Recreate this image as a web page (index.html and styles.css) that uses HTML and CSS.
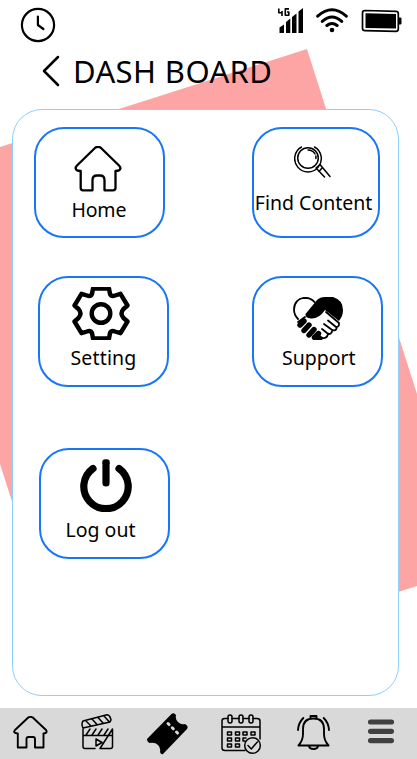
FILE: index.html
```
<!DOCTYPE html>
<html lang="en">
<head>
<meta charset="utf-8">
<title>Dash board</title>
<link rel="stylesheet" href="styles.css">
</head>
<body>
<main class="screen">
  <svg class="backdrop" viewBox="0 0 417 759" aria-hidden="true"><path d="M0 147 307 49 417 394V586L73.700 694.800 0 464Z"/></svg>
  <header class="status">
    <svg class="clock" viewBox="0 0 36 36"><circle cx="18" cy="18" r="16.100"/><path d="M17.900 9.500v8.500l5.500 4"/></svg>
    <svg class="signal" viewBox="0 0 26 26"><path d="M1.500 19.500 6 16.500V25H1.500ZM8 14 12.300 10.500V25H8ZM14 9 18.500 5.500V25H14ZM20.500 3.500 25 0V25H20.500Z"/><path class="gen" d="M.8.500v4.300h4M4 3v5M11 .9H7.300V7.200h3.500V4H9"/></svg>
    <svg class="wifi" viewBox="0 0 32 25"><path d="M1.700 8.200Q16-4.600 30.300 8.200M6.300 13.400Q16 4.600 25.700 13.400M10.900 17.500Q16 13.400 21.100 17.500"/><circle cx="16" cy="22" r="2.300"/></svg>
    <svg class="battery" viewBox="0 0 41 24"><path class="shell" d="M4 1.500 35 2.300Q37.300 2.400 37.300 4.500V20Q37.300 22.300 35 22.300L4 21.700Q1.500 21.600 1.500 19.500V4Q1.500 1.500 4 1.500Z"/><path d="M4.500 4.300 35 5V19.500L4.500 19ZM38 8.500h1.300q1.200 0 1.200 1.200v4.500q0 1.300-1.200 1.300H38Z"/></svg>
  </header>
  <div class="heading">
    <svg class="back" viewBox="0 0 18 32"><path d="M16 2 2 16 16 30"/></svg>
    <h1>DASH BOARD</h1>
  </div>
  <section class="panel">
    <div class="row first">
      <a class="tile home">
        <svg class="line" viewBox="0 0 48 46"><path d="M21.500 1.500Q24 0 26.500 1.500L45 19.500Q47.500 22 45.500 24 44 25 41.500 25V42Q41.500 44.300 39 44.300H30.500V34Q30.500 29.500 26 29.500H23Q18.500 29.500 18.500 34V44.300H9Q6.700 44.300 6.700 42V25Q4 25 2.500 24 .5 22 3 19.500Z"/></svg>
        <span>Home</span>
      </a>
      <a class="tile find">
        <svg class="lens" viewBox="0 0 37 33"><path d="M7.500 1A13.300 13.300 0 1 0 20.500 1"/><circle cx="14" cy="12" r="10.300"/><path d="M14 4q5 .2 7 4M21.900 10v2.500M22 22 30.500 31M26 18.500 36 30.500M22 22 26 18.500M25 25.500l3.500-4"/></svg>
        <span>Find Content</span>
      </a>
    </div>
    <div class="row second">
      <a class="tile setting">
        <svg class="gear" viewBox="0 0 58 53"><path d="M21 1.500H37L38 7Q39.500 10 43 8.500L48.500 6.800 55.500 18.500 51.500 22Q47.500 26.500 51.500 31L55.500 34.500 48.500 46.200 43 44.500Q39.500 43 38 46L37 51.500H21L20 46Q18.500 43 15 44.500L9.500 46.200 2.500 34.500 6.500 31Q10.500 26.500 6.500 22L2.500 18.500 9.500 6.800 15 8.500Q18.500 10 20 7Z"/><circle cx="29" cy="26.500" r="9.300"/></svg>
        <span>Setting</span>
      </a>
      <a class="tile support">
        <svg class="hands" viewBox="0 0 50 43"><path class="cuff" d="M5 22Q1 18 1 12.500C1 6 5 1 12 .8Q18 .8 21.500 5"/><path d="M24 3Q27 0 32 0H40Q50 3 50 13 50 19 46 24L32 13Q26 22 18 21.500 12 21 12.500 17Z"/><path class="fingers" d="m11 24-4 4M16 28l-5 5.500M21 32.500l-5 5.500M25.500 36.500l-4 4"/><path d="M24 40l3-2 3.500 3-1.500 2h-7Z"/><path class="cuff" d="M12 20 5 25M33 15 46 26Q46.500 30 43 30L35 23.500M44 30Q43 35 38.500 32.500L31 27M39.500 33Q38 39 34 36L29 32M35 37Q34 42 29 41"/></svg>
        <span>Support</span>
      </a>
    </div>
    <div class="row third">
      <a class="tile logout">
        <svg class="power" viewBox="0 0 52 53"><path d="M13 9.500A22.200 22.200 0 1 0 39 9.500M26 24V4"/><path d="M22.500 5V2Q22.500.5 24 .5h4q1.500 0 1.500 1.500v3" class="cap"/></svg>
        <span>Log out</span>
      </a>
    </div>
  </section>
  <nav class="tabs">
    <svg class="tab-home" viewBox="0 0 35 33"><path d="M15.500 1.300Q17.500.5 19.500 1.300L33 14Q35 17 30.500 17.500V31.500H22V23Q22 21 20 21H15.500Q13.500 21 13.500 23V31.500H4.800V17.500Q-.5 17 2 14Z"/></svg>
    <svg class="tab-film" viewBox="0 0 33 36"><path d="M2 15V32.500Q2 34.500 4 34.500H14M19 34.500h10.500Q31.500 34.500 31.500 32.500V15ZM2 21.500H31.500M5 21l4-6M11 21l4-6M17 21l4-6M23 21l4-6M2 14Q0 10 2 7L26 .8Q29 1 30 6L29 8 2 14ZM5 7l5 5M11 5l5 5.500M17 3.500l5 5.500M23 2l5 5.500M15 25v7l6-3.500Z"/></svg>
    <svg class="tab-ticket" viewBox="0 0 41 42"><path d="M0 26 24.500 1Q27-1 29 2 28 6 31 9 34 12 38 11 42 13 40 16L16 41Q14 42 13 39 14 35 11 32 8 29 3 30 0 29 0 26Z"/><path class="perf" d="M21 10.500 31.500 21"/></svg>
    <svg class="tab-calendar" viewBox="0 0 40 40"><path d="M24 36.500H4Q1 36.500 1 34V7Q1 4.500 3.500 4.500H7M11 4.500h7M22 4.500h6M32 4.500h4Q39 4.500 39 7V25M1 13H39"/><rect x="7" y="1" width="4" height="8" rx="2"/><rect x="18" y="1" width="4" height="8" rx="2"/><rect x="28" y="1" width="4" height="8" rx="2"/><path d="M6.500 18h4v3h-4zM14.500 18h4v3h-4zM22 18h4v3h-4zM30 18h4v3h-4zM6.500 24h4v3h-4zM14.500 24h4v3h-4zM25 24h-3v3h2M6.500 30h4v3h-4zM14.500 30h4v3h-4z"/><circle cx="31.500" cy="31.500" r="7.800"/><path d="m27 31.500 3.300 3.500 6-7"/></svg>
    <svg class="tab-bell" viewBox="0 0 33 35"><path d="M1.500 30.500Q6 25.500 6 19V14Q6 3.500 16.500 3.500T27 14v5q0 6.500 4.500 11.500ZM13.500 4V1h6v3M12 31q.5 3 4.500 3t4.500-3M6.300 3Q1.300 8 1 15M26.700 3Q31.700 8 32 15"/></svg>
    <svg class="tab-menu" viewBox="0 0 26 25"><path d="M2.500 3h21M2.500 12.300h21M2.500 21.700h21"/></svg>
  </nav>
</main>
</body>
</html>
```
FILE: styles.css
```
* { box-sizing: border-box; }
body { margin: 0; background: #fff; color: #000; font-family: "Noto Sans", sans-serif; }
svg { display: block; flex: none; fill: none; stroke: #000; stroke-linecap: round; stroke-linejoin: round; }
.screen { position: relative; isolation: isolate; display: flex; flex-direction: column; width: 417px; height: 759px; overflow: hidden; }
.backdrop { position: absolute; z-index: -1; inset: 0; width: 417px; height: 759px; fill: #fda5a5; stroke: none; }

.status { display: flex; align-items: flex-start; height: 50px; padding: 7px 0 0 20px; }
.clock { width: 36px; height: 36px; stroke-width: 2.200; }
.signal { width: 26px; height: 26px; margin: 1px 0 0 222px; fill: #000; stroke: none; overflow: visible; }
.signal .gen { fill: none; stroke: #000; stroke-width: 1.600; stroke-linecap: butt; }
.wifi { width: 32px; height: 25px; margin: 1px 0 0 12px; stroke-width: 3; }
.wifi circle { fill: #000; stroke: none; }
.battery { width: 41px; height: 24px; margin: 2px 0 0 13px; fill: #000; stroke: none; }
.battery .shell { fill: none; stroke: #000; stroke-width: 1.700; }

.heading { display: flex; align-items: center; height: 59px; padding: 0 0 17px 42px; }
.back { width: 18px; height: 32px; stroke-width: 2.500; }
h1 { margin: 0 0 0 13px; font-size: 31px; font-weight: 400; line-height: 42px; white-space: nowrap; letter-spacing: 0.400px; }

.panel { width: 387px; height: 587px; margin-left: 12px; padding-top: 17px; background: #fff; border: 1px solid #8dd0fb; border-radius: 30px; }
.row { display: flex; align-items: flex-start; }
.first { padding-left: 21px; gap: 87px; height: 149px; }
.second { padding-left: 25px; gap: 83px; height: 172px; }
.third { padding-left: 26px; }
.tile { display: flex; flex-direction: column; align-items: flex-start; width: 131px; height: 111px; border: 2px solid #1877f2; border-radius: 30px; }
.tile span { font-size: 19.500px; line-height: 26px; white-space: nowrap; }
.find { width: 128px; }
.home svg { width: 48px; height: 46px; margin: 17px 0 0 38px; stroke-width: 2.300; }
.home span { margin: 5px 0 0 35.500px; letter-spacing: -0.200px; }
.find svg { width: 37px; height: 33px; margin: 17px 0 0 40px; stroke-width: 1.500; }
.find span { margin: 11px 0 0 0.800px; }
.setting svg { width: 58px; height: 53px; margin: 9px 0 0 32px; stroke-width: 4.400; }
.setting span { margin: 5px 0 0 30.500px; letter-spacing: 0.150px; }
.support svg { width: 50px; height: 43px; margin: 19px 0 0 39px; fill: #000; stroke: none; }
.support .cuff { fill: none; stroke: #000; stroke-width: 1.800; }
.support .fingers { fill: none; stroke: #000; stroke-width: 5.400; }
.support span { margin: 5px 0 0 28px; }
.logout svg { width: 52px; height: 53px; margin: 9px 0 0 38.500px; stroke-width: 7.200; }
.logout .cap { fill: #000; stroke: none; }
.logout span { margin: 5px 0 0 24.500px; }

.tabs { display: flex; align-items: flex-start; width: 417px; height: 51px; margin-top: 12px; background: #d9d9d9; }
.tab-home { width: 35px; height: 33px; margin: 8px 0 0 12.500px; stroke-width: 1.900; }
.tab-film { width: 33px; height: 36px; margin: 6px 0 0 33px; stroke-width: 1.500; }
.tab-ticket { width: 41px; height: 42px; margin: 5px 0 0 33px; fill: #000; stroke: none; }
.tab-ticket .perf { stroke: #d9d9d9; stroke-width: 3; stroke-dasharray: 1.500 4.500; }
.tab-calendar { width: 40px; height: 40px; margin: 6px 0 0 33.500px; stroke-width: 1.500; overflow: visible; }
.tab-bell { width: 33px; height: 35px; margin: 7px 0 0 35.500px; stroke-width: 1.900; }
.tab-menu { width: 26px; height: 25px; margin: 11px 0 0 38px; stroke: #404040; stroke-width: 5.200; }
```
